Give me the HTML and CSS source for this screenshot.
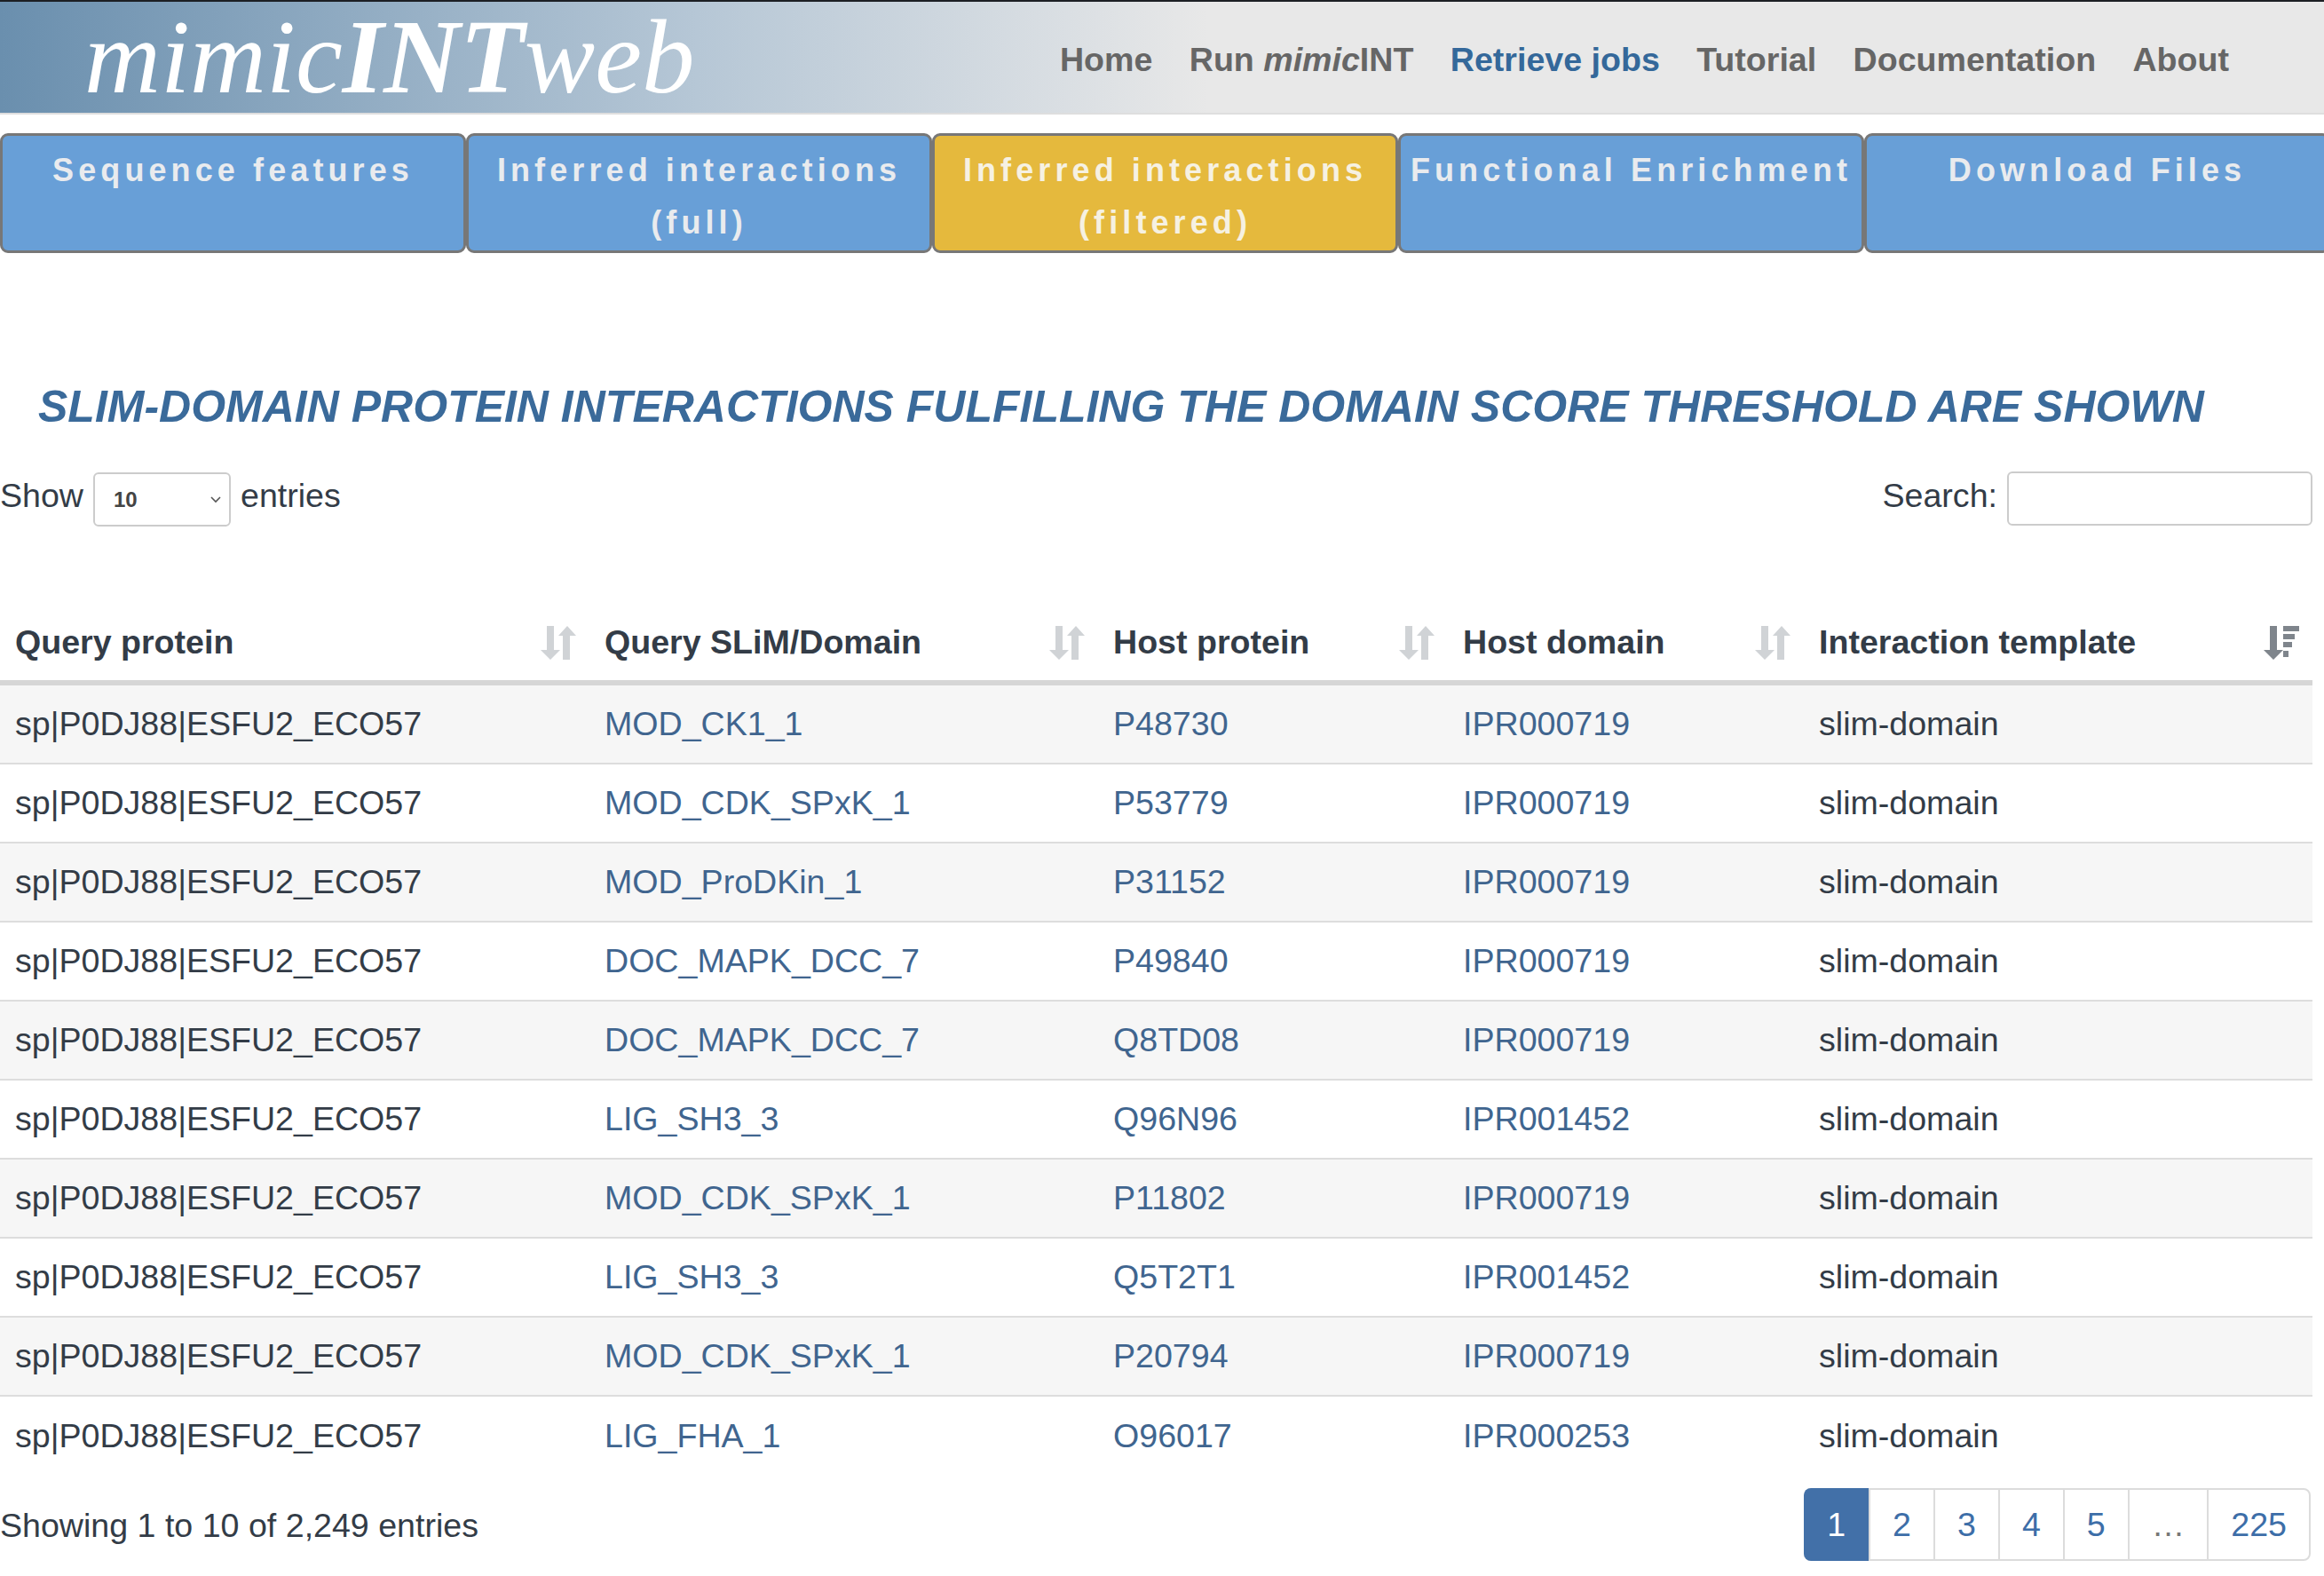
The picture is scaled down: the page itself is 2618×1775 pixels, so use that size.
FILE: index.html
```html
<!DOCTYPE html>
<html lang="en">
<head>
    <meta charset="UTF-8">
    <meta name="viewport" content="width=device-width, initial-scale=1.0">
    <title>mimicINTweb</title>
    <link rel="stylesheet" href="styles.css">
</head>
<body>
    <header class="topbar">
        <a class="logo" href="#"><i>mimic</i><b>INT</b><i>web</i></a>
        <nav class="topnav">
            <a href="#">Home</a>
            <a href="#">Run <i>mimic</i>INT</a>
            <a class="current" href="#">Retrieve jobs</a>
            <a href="#">Tutorial</a>
            <a href="#">Documentation</a>
            <a href="#">About</a>
        </nav>
    </header>

    <div class="tabs">
        <a class="tab" href="#">Sequence features</a>
        <a class="tab" href="#">Inferred interactions (full)</a>
        <a class="tab active" href="#">Inferred interactions (filtered)</a>
        <a class="tab" href="#">Functional Enrichment</a>
        <a class="tab" href="#">Download Files</a>
    </div>

    <main class="content">
        <h2 class="title">SLIM-DOMAIN PROTEIN INTERACTIONS FULFILLING THE DOMAIN SCORE THRESHOLD ARE SHOWN</h2>

        <div class="controls">
            <label class="length">Show
                <span class="select-wrap">
                    <select class="length-select">
                        <option>10</option>
                        <option>25</option>
                        <option>50</option>
                    </select>
                    <svg class="chevron" viewBox="0 0 12 8"><path d="M1 1l5 5 5-5" fill="none" stroke="#555" stroke-width="1.6"/></svg>
                </span>
                entries</label>
            <label class="search">Search: <input class="search-input" type="search"></label>
        </div>

        <table class="results">
            <thead>
                <tr>
                    <th class="col-query">
                        <div class="th-inner">Query protein
                            <svg class="sort" viewBox="0 0 40 38"><path d="M7 0h8v27h7L11 38 0 27h7z"/><path d="M25 38V11h-5L30 0l10 11h-7v27z"/></svg>
                        </div>
                    </th>
                    <th class="col-slim">
                        <div class="th-inner">Query SLiM/Domain
                            <svg class="sort" viewBox="0 0 40 38"><path d="M7 0h8v27h7L11 38 0 27h7z"/><path d="M25 38V11h-5L30 0l10 11h-7v27z"/></svg>
                        </div>
                    </th>
                    <th class="col-host">
                        <div class="th-inner">Host protein
                            <svg class="sort" viewBox="0 0 40 38"><path d="M7 0h8v27h7L11 38 0 27h7z"/><path d="M25 38V11h-5L30 0l10 11h-7v27z"/></svg>
                        </div>
                    </th>
                    <th class="col-domain">
                        <div class="th-inner">Host domain
                            <svg class="sort" viewBox="0 0 40 38"><path d="M7 0h8v27h7L11 38 0 27h7z"/><path d="M25 38V11h-5L30 0l10 11h-7v27z"/></svg>
                        </div>
                    </th>
                    <th class="col-template">
                        <div class="th-inner">Interaction template
                            <svg class="sort sorted" viewBox="0 0 40 38"><path d="M7 0h8v27h7L11 38 0 27h7z"/><path d="M22 0h18v6H22zM22 9h13v6H22zM22 18h10v6H22zM22 28h6v7h-6z"/></svg>
                        </div>
                    </th>
                </tr>
            </thead>
            <tbody>
                <tr>
                    <td>sp|P0DJ88|ESFU2_ECO57</td>
                    <td><a href="#">MOD_CK1_1</a></td>
                    <td><a href="#">P48730</a></td>
                    <td><a href="#">IPR000719</a></td>
                    <td>slim-domain</td>
                </tr>
                <tr>
                    <td>sp|P0DJ88|ESFU2_ECO57</td>
                    <td><a href="#">MOD_CDK_SPxK_1</a></td>
                    <td><a href="#">P53779</a></td>
                    <td><a href="#">IPR000719</a></td>
                    <td>slim-domain</td>
                </tr>
                <tr>
                    <td>sp|P0DJ88|ESFU2_ECO57</td>
                    <td><a href="#">MOD_ProDKin_1</a></td>
                    <td><a href="#">P31152</a></td>
                    <td><a href="#">IPR000719</a></td>
                    <td>slim-domain</td>
                </tr>
                <tr>
                    <td>sp|P0DJ88|ESFU2_ECO57</td>
                    <td><a href="#">DOC_MAPK_DCC_7</a></td>
                    <td><a href="#">P49840</a></td>
                    <td><a href="#">IPR000719</a></td>
                    <td>slim-domain</td>
                </tr>
                <tr>
                    <td>sp|P0DJ88|ESFU2_ECO57</td>
                    <td><a href="#">DOC_MAPK_DCC_7</a></td>
                    <td><a href="#">Q8TD08</a></td>
                    <td><a href="#">IPR000719</a></td>
                    <td>slim-domain</td>
                </tr>
                <tr>
                    <td>sp|P0DJ88|ESFU2_ECO57</td>
                    <td><a href="#">LIG_SH3_3</a></td>
                    <td><a href="#">Q96N96</a></td>
                    <td><a href="#">IPR001452</a></td>
                    <td>slim-domain</td>
                </tr>
                <tr>
                    <td>sp|P0DJ88|ESFU2_ECO57</td>
                    <td><a href="#">MOD_CDK_SPxK_1</a></td>
                    <td><a href="#">P11802</a></td>
                    <td><a href="#">IPR000719</a></td>
                    <td>slim-domain</td>
                </tr>
                <tr>
                    <td>sp|P0DJ88|ESFU2_ECO57</td>
                    <td><a href="#">LIG_SH3_3</a></td>
                    <td><a href="#">Q5T2T1</a></td>
                    <td><a href="#">IPR001452</a></td>
                    <td>slim-domain</td>
                </tr>
                <tr>
                    <td>sp|P0DJ88|ESFU2_ECO57</td>
                    <td><a href="#">MOD_CDK_SPxK_1</a></td>
                    <td><a href="#">P20794</a></td>
                    <td><a href="#">IPR000719</a></td>
                    <td>slim-domain</td>
                </tr>
                <tr>
                    <td>sp|P0DJ88|ESFU2_ECO57</td>
                    <td><a href="#">LIG_FHA_1</a></td>
                    <td><a href="#">O96017</a></td>
                    <td><a href="#">IPR000253</a></td>
                    <td>slim-domain</td>
                </tr>
            </tbody>
        </table>

        <div class="table-footer">
            <div class="info">Showing 1 to 10 of 2,249 entries</div>
            <div class="pagination">
                <a class="page current-page" href="#">1</a>
                <a class="page" href="#">2</a>
                <a class="page" href="#">3</a>
                <a class="page" href="#">4</a>
                <a class="page" href="#">5</a>
                <span class="page gap">…</span>
                <a class="page" href="#">225</a>
            </div>
        </div>
    </main>
</body>
</html>
```

FILE: styles.css
```css
* {
    box-sizing: border-box;
}

html, body {
    overflow-x: hidden;
}

body {
    margin: 0;
    background-color: #fff;
    color: #333c47;
    font-family: "Liberation Sans", Arial, sans-serif;
    font-size: 37.6px;
}

a {
    text-decoration: none;
}

/* top bar */
.topbar {
    display: flex;
    align-items: center;
    justify-content: space-between;
    height: 129px;
    padding: 0 107px 0 95px;
    border-top: 2px solid #1c1f24;
    border-bottom: 2px solid #dedede;
    background: linear-gradient(to right, #6a8fae 0%, #b6c7d6 30%, #e8e8e8 52%);
}

.logo {
    color: #fff;
    font-family: "Liberation Serif", "Times New Roman", serif;
    font-size: 119px;
    font-style: italic;
    line-height: 1;
}

.logo b {
    font-weight: bold;
}

.topnav {
    display: flex;
    gap: 41.4px;
    padding-top: 5px;
}

.topnav a {
    color: #666;
    font-weight: bold;
}

.topnav a.current {
    color: #34689a;
}

/* tabs */
.tabs {
    display: flex;
    width: 2640px;
    margin-top: 21px;
}

.tab {
    flex: 0 0 525px;
    height: 135px;
    padding: 9px 8px 0;
    border: 3px solid #777;
    border-radius: 9px;
    background-color: #689fd7;
    color: #e9ebee;
    font-size: 36px;
    font-weight: bold;
    letter-spacing: 5.1px;
    line-height: 59px;
    text-align: center;
}

.tab.active {
    background-color: #e5b93d;
    color: #f6f1e2;
}

/* table and its controls */
.content {
    padding-right: 13px;
}

.title {
    margin: 143px 0 0 43px;
    color: #3a6a9a;
    font-size: 50px;
    font-style: italic;
    font-weight: bold;
    line-height: 60px;
}

.controls {
    display: flex;
    align-items: flex-start;
    justify-content: space-between;
    height: 61px;
    margin-top: 43px;
}

.length, .search {
    display: flex;
    align-items: flex-start;
    gap: 11px;
    line-height: 54px;
}

.select-wrap {
    position: relative;
    display: block;
    width: 155px;
    height: 61px;
}

.length-select {
    width: 100%;
    height: 100%;
    padding-left: 21px;
    border: 2px solid #ccc;
    border-radius: 6px;
    background-color: #fff;
    color: #444;
    font-family: inherit;
    font-size: 24px;
    font-weight: bold;
    appearance: none;
}

.chevron {
    position: absolute;
    top: 28px;
    right: 11px;
    width: 12px;
    height: 8px;
}

.search-input {
    width: 344px;
    height: 61px;
    border: 2px solid #ccc;
    border-radius: 6px;
    background-color: #fff;
}

.results {
    width: 100%;
    margin-top: 89px;
    border-collapse: separate;
    border-spacing: 0;
    table-layout: fixed;
}

.col-query { width: 664px; }
.col-slim { width: 573px; }
.col-host { width: 394px; }
.col-domain { width: 401px; }

.results th {
    height: 91px;
    padding: 0 15px 0 17px;
    border-bottom: 6px solid #d6d6d6;
    font-weight: bold;
    text-align: left;
}

.th-inner {
    display: flex;
    align-items: center;
    justify-content: space-between;
}

.sort {
    width: 40px;
    height: 38px;
    fill: #d0d3d6;
}

.sort.sorted {
    fill: #7f858c;
}

.results td {
    height: 89px;
    padding: 0 17px;
    border-bottom: 2px solid #dddddd;
}

.results tbody tr:nth-child(odd) {
    background-color: #f6f6f6;
}

.results tbody tr:last-child td {
    border-bottom: none;
}

.results td a {
    color: #40658f;
}

.table-footer {
    display: flex;
    align-items: center;
    justify-content: space-between;
    margin-top: 14px;
    padding-right: 2px;
}

.info {
    padding-top: 2px;
}

.pagination {
    display: flex;
    height: 82px;
    border: 2px solid #dcdcdc;
    border-radius: 8px;
}

.page {
    display: flex;
    align-items: center;
    padding: 0 25px;
    border-left: 2px solid #dcdcdc;
    color: #3d6ea8;
}

.page:first-child {
    border-left: none;
}

.page.current-page {
    margin: -2px 0 -2px -2px;
    padding: 0 26px;
    border-radius: 8px 0 0 8px;
    background-color: #4270a8;
    color: #fff;
}

.page.gap {
    color: #777;
}
```
